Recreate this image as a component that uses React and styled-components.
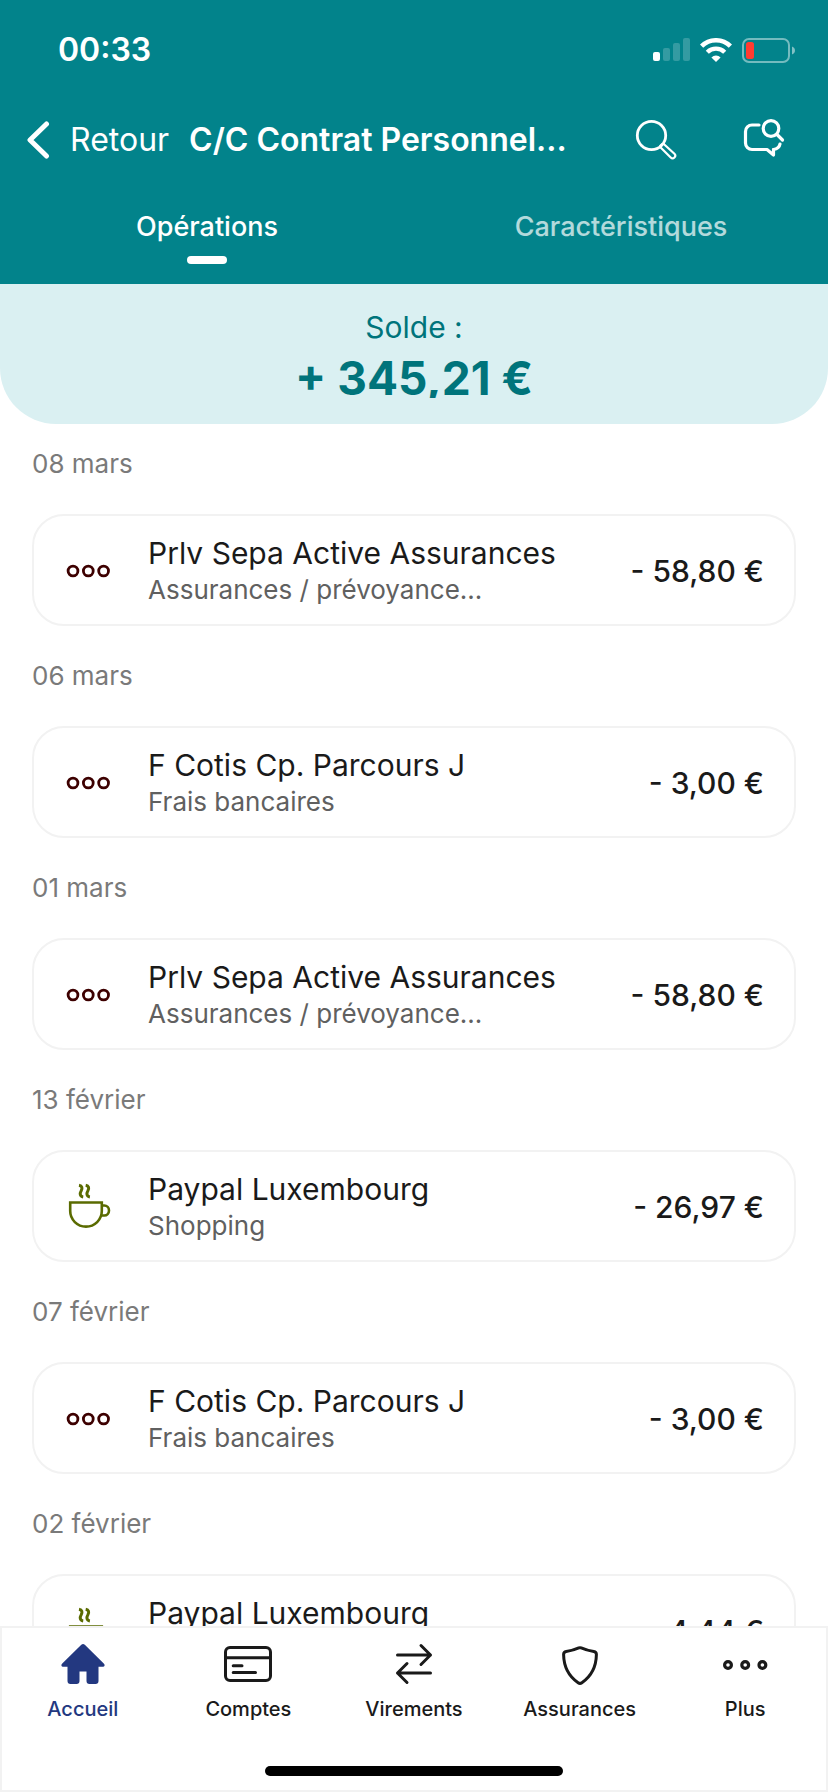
import React from "react";
import styled, { createGlobalStyle } from "styled-components";

const GlobalStyle = createGlobalStyle`
  *, *::before, *::after { box-sizing: border-box; }
  body { margin: 0; background: #ffffff; }
  button { font: inherit; color: inherit; border: 0; padding: 0; background: none; cursor: pointer; }
  h1, h2, p, ul { margin: 0; padding: 0; }
  ul { list-style: none; }
  svg { display: block; flex: none; }
`;

const Screen = styled.div`
  display: flex;
  flex-direction: column;
  height: 100vh;
  font-family: Inter, "Liberation Sans", sans-serif;
  color: #1a1a1a;
  background: #ffffff;
`;

const Header = styled.header`
  flex: none;
  background: #02838b;
  color: #ffffff;
`;

const StatusBar = styled.div`
  display: flex;
  align-items: center;
  justify-content: space-between;
  height: 100px;
  padding: 0 33px 0 58px;
`;

const Clock = styled.time`
  font-size: 32px;
  line-height: 40px;
  font-weight: 600;
`;

const StatusIcons = styled.div`
  display: flex;
  align-items: center;
  gap: 10px;
`;

const NavBar = styled.div`
  display: flex;
  align-items: center;
  height: 80px;
  padding: 0 43px 0 26px;
`;

const BackButton = styled.button`
  display: flex;
  align-items: center;
  gap: 20px;
  font-size: 32px;
  line-height: 40px;
`;

const Title = styled.h1`
  flex: 1;
  min-width: 0;
  margin-left: 20px;
  font-size: 32px;
  line-height: 40px;
  font-weight: 600;
  white-space: nowrap;
`;

const NavActions = styled.div`
  display: flex;
  gap: 66px;
`;

const IconButton = styled.button`
  display: flex;
`;

const Tabs = styled.div`
  display: grid;
  grid-template-columns: 1fr 1fr;
  height: 104px;
  padding-top: 28px;
`;

const Tab = styled.button`
  display: flex;
  flex-direction: column;
  align-items: center;
  gap: 10px;
  font-size: 27px;
  line-height: 38px;
  font-weight: 500;
  opacity: ${(p) => (p["aria-selected"] ? 1 : 0.7)};

  &::after {
    content: "";
    width: 40px;
    height: 8px;
    border-radius: 4px;
    background: ${(p) => (p["aria-selected"] ? "#ffffff" : "transparent")};
  }
`;

const Balance = styled.section`
  flex: none;
  display: flex;
  flex-direction: column;
  align-items: center;
  height: 140px;
  padding-top: 24px;
  border-radius: 0 0 56px 56px;
  background: #daf0f2;
  color: #00747b;
`;

const BalanceLabel = styled.h2`
  font-size: 30px;
  line-height: 38px;
  font-weight: 400;
`;

const BalanceAmount = styled.p`
  height: 52px;
  overflow: hidden;
  font-size: 46px;
  line-height: 64px;
  font-weight: 700;
`;

const Operations = styled.main`
  flex: 1;
  min-height: 0;
  overflow: hidden;
  display: flex;
  flex-direction: column;
  gap: 10px;
  padding: 0 32px;
`;

const DateHeading = styled.h2`
  padding: 20px 0 30px;
  font-size: 26px;
  line-height: 40px;
  font-weight: 400;
  color: #7a7a7a;
`;

const Card = styled.button`
  display: flex;
  align-items: center;
  width: 100%;
  height: 112px;
  padding: 2px 30px 0;
  border: 2px solid #f2f2f2;
  border-radius: 32px;
  text-align: left;
`;

const CardText = styled.span`
  flex: 1;
  min-width: 0;
  margin-left: 36px;
  display: flex;
  flex-direction: column;
`;

const CardTitle = styled.span`
  font-size: 30px;
  line-height: 38px;
`;

const CardCategory = styled.span`
  font-size: 26px;
  line-height: 36px;
  color: #606060;
`;

const CardAmount = styled.span`
  font-size: 30px;
  line-height: 38px;
  font-weight: 500;
  white-space: nowrap;
`;

const BottomBar = styled.nav`
  flex: none;
  display: flex;
  flex-direction: column;
  align-items: center;
  height: 166px;
  padding-top: 14px;
  box-shadow: inset 0 0 0 2px #f2f2f2;
  background: #ffffff;
`;

const NavList = styled.ul`
  display: grid;
  grid-template-columns: repeat(5, 1fr);
  width: 100%;
`;

const NavItem = styled.a`
  display: flex;
  flex-direction: column;
  align-items: center;
  gap: 8px;
  font-size: 20px;
  line-height: 26px;
  font-weight: 500;
  text-decoration: none;
  color: ${(p) => (p["aria-current"] ? "#233880" : "#1a1a1a")};
`;

const HomeIndicator = styled.div`
  width: 36%;
  height: 10px;
  margin-top: 44px;
  border-radius: 5px;
  background: #000000;
`;

const SignalIcon = () => (
  <svg width="37" height="24" viewBox="0 0 37 24" fill="#fff" aria-hidden="true">
    <rect x="0" y="14" width="7" height="9" rx="2" />
    <rect x="10" y="10" width="7" height="13" rx="2" opacity="0.2" />
    <rect x="20" y="5" width="7" height="18" rx="2" opacity="0.2" />
    <rect x="30" y="0" width="7" height="23" rx="2" opacity="0.2" />
  </svg>
);

const WifiIcon = () => (
  <svg width="32" height="24" viewBox="0 0 32 24" fill="none" stroke="#fff" aria-hidden="true">
    <path d="M1.6 8.2a20.5 20.5 0 0 1 28.8 0" strokeWidth="4.6" />
    <path d="M7.3 14.2a12.4 12.4 0 0 1 17.4 0" strokeWidth="4.4" />
    <path d="M16 24l-4.6-4.6a6.7 6.7 0 0 1 9.2 0z" fill="#fff" stroke="none" />
  </svg>
);

const BatteryIcon = () => (
  <svg width="53" height="25" viewBox="0 0 53 25" aria-hidden="true">
    <rect x="1" y="1" width="46" height="23" rx="6" fill="none" stroke="#fff" strokeWidth="2" opacity="0.45" />
    <rect x="4" y="4" width="8" height="17" rx="2.5" fill="#ff3b30" />
    <path d="M50 8.5c1.8.7 3 2.2 3 4s-1.2 3.3-3 4z" fill="#fff" opacity="0.5" />
  </svg>
);

const BackIcon = () => (
  <svg width="24" height="40" viewBox="0 0 24 40" fill="none" stroke="#fff" strokeWidth="5" strokeLinecap="round" strokeLinejoin="round" aria-hidden="true">
    <path d="M20.500 4L4 20l16.500 16" />
  </svg>
);

const SearchIcon = () => (
  <svg width="42" height="42" viewBox="0 0 42 42" fill="none" stroke="#fff" strokeWidth="2.800" aria-hidden="true">
    <circle cx="16.500" cy="16.500" r="14.200" />
    <path d="M25.400 28.200l10.300 10.300a2.600 2.600 0 0 0 3.700-3.700L28.500 24.800" strokeWidth="2.200" strokeLinecap="round" />
    <path d="M24.800 27.400l2.900-2.800" strokeWidth="2.200" />
  </svg>
);

const ChatSearchIcon = () => (
  <svg width="42" height="42" viewBox="0 0 42 42" fill="none" stroke="#fff" strokeWidth="3.200" strokeLinecap="round" strokeLinejoin="round" aria-hidden="true">
    <path d="M16 6H9A6.500 6.500 0 0 0 2.500 12.500V24A6.500 6.500 0 0 0 9 30.500H24L30.500 36V30.500" />
    <path d="M30.500 30.500c3.600-.6 6-2.600 6.500-5.500" />
    <circle cx="28" cy="9.500" r="7.800" />
    <path d="M34 15.500l5.500 5.500" />
  </svg>
);

const RingsIcon = () => (
  <svg width="48" height="48" viewBox="0 0 48 48" fill="none" stroke="#3d0000" strokeWidth="2.800" aria-hidden="true">
    <circle cx="9" cy="24" r="4.900" />
    <circle cx="24.300" cy="24" r="4.900" />
    <circle cx="39.600" cy="24" r="4.900" />
  </svg>
);

const CupIcon = () => (
  <svg width="48" height="48" viewBox="0 0 48 48" fill="none" stroke="#5a6b00" strokeWidth="2.600" aria-hidden="true">
    <path d="M6.200 19.500h31.600v8.600a15.800 15.500 0 0 1-31.600 0z" />
    <path d="M37.800 22.500h2.500a4.700 5 0 0 1 0 10h-3.400" />
    <path d="M15 2.300c3.200.6 3.600 2.800 2.200 5.400-1.600 2.800-1.400 5.800 2 6.300M21.700 2.300c3.200.6 3.600 2.800 2.200 5.400-1.600 2.800-1.400 5.800 2 6.300" strokeWidth="3" />
  </svg>
);

const HomeIcon = () => (
  <svg width="48" height="48" viewBox="0 0 48 48" fill="currentColor" aria-hidden="true">
    <path d="M22.300 4.800a2.600 2.600 0 0 1 3.500 0L45 23.800c1.200 1.300.6 3-1 3H39.500V41a3 3 0 0 1-3 3h-6a3 3 0 0 1-3-3V31.500h-7V41a3 3 0 0 1-3 3h-6a3 3 0 0 1-3-3V26.800H4c-1.600 0-2.200-1.700-1-3z" />
  </svg>
);

const AccountIcon = () => (
  <svg width="48" height="48" viewBox="0 0 48 48" fill="none" stroke="currentColor" strokeWidth="3" strokeLinecap="round" aria-hidden="true">
    <rect x="1.500" y="7.500" width="45" height="33" rx="4.500" />
    <path d="M2 17.700h44M9.200 25.700h8.800M9.200 32.500H31.500" />
  </svg>
);

const TransferIcon = () => (
  <svg width="48" height="48" viewBox="0 0 48 48" fill="none" stroke="currentColor" strokeWidth="3" strokeLinecap="round" strokeLinejoin="round" aria-hidden="true">
    <path d="M7.500 15H40.500M31 5.500L40.500 15L31 24.500M40.500 33H7.500M17 23.500L7.500 33L17 42.500" />
  </svg>
);

const ShieldIcon = () => (
  <svg width="48" height="48" viewBox="0 0 48 48" fill="none" stroke="currentColor" strokeWidth="3" strokeLinejoin="round" aria-hidden="true">
    <path d="M22.800 7.900a3 3 0 0 1 2.400 0c3.700 1.700 7.600 2.800 12.600 3.500 1.700.3 2.600 1.500 2.600 3.100-.2 11.800-5.200 21.800-14.500 28.200a3.300 3.300 0 0 1-3.800 0C12.800 36.300 7.800 26.300 7.600 14.500c0-1.600.9-2.800 2.600-3.100 5-.7 8.900-1.800 12.600-3.500z" />
  </svg>
);

const MoreIcon = () => (
  <svg width="48" height="48" viewBox="0 0 48 48" fill="none" stroke="currentColor" strokeWidth="3.200" aria-hidden="true">
    <circle cx="7" cy="25" r="3.400" />
    <circle cx="24.200" cy="25" r="3.400" />
    <circle cx="41.400" cy="25" r="3.400" />
  </svg>
);

const operations = [
  { date: "08 mars", title: "Prlv Sepa Active Assurances", category: "Assurances / prévoyance...", amount: "- 58,80 €", Icon: RingsIcon },
  { date: "06 mars", title: "F Cotis Cp. Parcours J", category: "Frais bancaires", amount: "- 3,00 €", Icon: RingsIcon },
  { date: "01 mars", title: "Prlv Sepa Active Assurances", category: "Assurances / prévoyance...", amount: "- 58,80 €", Icon: RingsIcon },
  { date: "13 février", title: "Paypal Luxembourg", category: "Shopping", amount: "- 26,97 €", Icon: CupIcon },
  { date: "07 février", title: "F Cotis Cp. Parcours J", category: "Frais bancaires", amount: "- 3,00 €", Icon: RingsIcon },
  { date: "02 février", title: "Paypal Luxembourg", category: "Shopping", amount: "- 4,44 €", Icon: CupIcon },
];

const navItems = [
  { label: "Accueil", Icon: HomeIcon, current: true },
  { label: "Comptes", Icon: AccountIcon },
  { label: "Virements", Icon: TransferIcon },
  { label: "Assurances", Icon: ShieldIcon },
  { label: "Plus", Icon: MoreIcon },
];

export default function App() {
  return (
    <Screen>
      <GlobalStyle />
      <Header>
        <StatusBar>
          <Clock>00:33</Clock>
          <StatusIcons>
            <SignalIcon />
            <WifiIcon />
            <BatteryIcon />
          </StatusIcons>
        </StatusBar>
        <NavBar>
          <BackButton type="button">
            <BackIcon />
            Retour
          </BackButton>
          <Title>C/C Contrat Personnel...</Title>
          <NavActions>
            <IconButton type="button" aria-label="Rechercher">
              <SearchIcon />
            </IconButton>
            <IconButton type="button" aria-label="Aide">
              <ChatSearchIcon />
            </IconButton>
          </NavActions>
        </NavBar>
        <Tabs role="tablist">
          <Tab type="button" role="tab" aria-selected={true}>Opérations</Tab>
          <Tab type="button" role="tab" aria-selected={false}>Caractéristiques</Tab>
        </Tabs>
      </Header>
      <Balance>
        <BalanceLabel>Solde :</BalanceLabel>
        <BalanceAmount>+ 345,21 €</BalanceAmount>
      </Balance>
      <Operations>
        {operations.map(({ date, title, category, amount, Icon }) => (
          <section key={date}>
            <DateHeading>{date}</DateHeading>
            <Card type="button">
              <Icon />
              <CardText>
                <CardTitle>{title}</CardTitle>
                <CardCategory>{category}</CardCategory>
              </CardText>
              <CardAmount>{amount}</CardAmount>
            </Card>
          </section>
        ))}
      </Operations>
      <BottomBar>
        <NavList>
          {navItems.map(({ label, Icon, current }) => (
            <li key={label}>
              <NavItem href="#" aria-current={current ? "page" : undefined}>
                <Icon />
                {label}
              </NavItem>
            </li>
          ))}
        </NavList>
        <HomeIndicator />
      </BottomBar>
    </Screen>
  );
}
